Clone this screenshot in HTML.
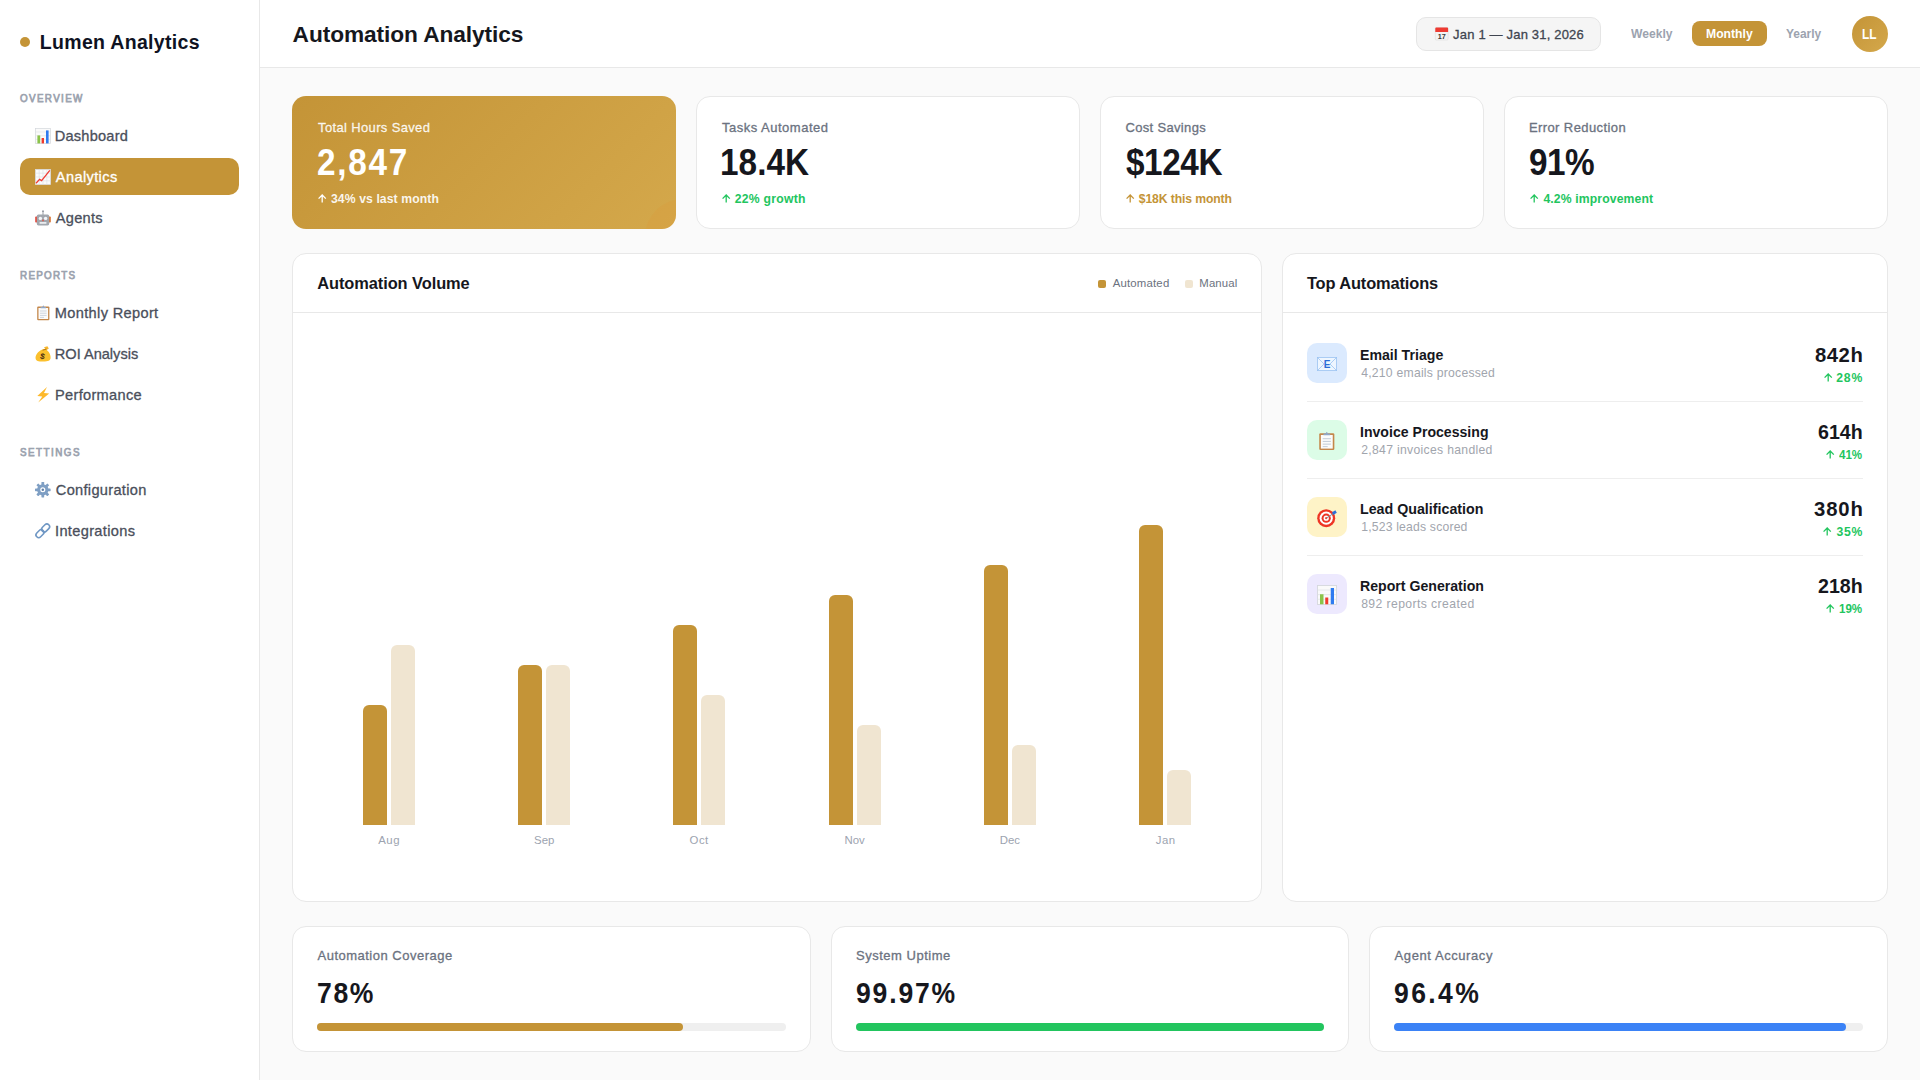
<!DOCTYPE html>
<html lang="en">
<head>
<meta charset="utf-8">
<title>Automation Analytics</title>
<style>
*{box-sizing:border-box;margin:0;padding:0}
html,body{width:1920px;height:1080px;overflow:hidden}
body{font-family:"Liberation Sans",sans-serif;background:#fafafa;color:#16171d;position:relative}
.t{position:absolute;line-height:20px;white-space:nowrap;transform-origin:0 50%}
.m{-webkit-text-stroke:.3px}
.s{-webkit-text-stroke:.75px}
.a{position:absolute}
svg{position:absolute;overflow:visible}
.sidebar{left:0;top:0;width:260px;height:1080px;background:#fff;border-right:1px solid #e8e8e8}
.header{left:260px;top:0;width:1660px;height:68px;background:#fff;border-bottom:1px solid #e8e8e8}
.card{background:#fff;border:1px solid #e8e8e8;border-radius:14px}
.gold{background:linear-gradient(135deg,#c49437 0%,#d4a84b 100%);border-radius:14px}
.bar{width:24px;border-radius:6px 6px 0 0}
.ib{left:1307px;width:40px;height:40px;border-radius:10px}
.sep{left:1307px;width:556px;height:1px;background:#eeeeee}
.trk{height:8px;border-radius:4px;background:#efefef}
.fil{height:8px;border-radius:4px}
</style>
</head>
<body>
<div class="a sidebar"></div>
<div class="a header"></div>
<div class="a" style="left:20px;top:37px;width:10px;height:10px;border-radius:50%;background:#c49437"></div>
<div class="a" style="left:20px;top:158px;width:219px;height:37px;border-radius:10px;background:#c49437"></div>
<svg style="left:35px;top:128.4px" width="16" height="16" viewBox="0 0 16 16"><rect x=".4" y=".4" width="15.2" height="15.2" fill="#fafafa" stroke="#d4d7dc" stroke-width=".7"/><path d="M.5 4h15M.5 7.7h15M.5 11.4h15" stroke="#dfe2e6" stroke-width=".6"/><rect x="2.4" y="7.4" width="2.8" height="8" fill="#8bc34a"/><rect x="6.6" y="10" width="2.4" height="5.4" fill="#f03a2e"/><rect x="11" y="2.4" width="2.6" height="13" fill="#2f7bf0"/></svg>
<svg style="left:35px;top:169.4px" width="16" height="16" viewBox="0 0 16 16"><rect x=".4" y=".4" width="15.2" height="15.2" fill="#fbfbfb" stroke="#d9dbdf" stroke-width=".7"/><path d="M.5 4.2h15M.5 8h15M.5 11.8h15M4.2 .5v15M8 .5v15M11.8 .5v15" stroke="#dcdfe3" stroke-width=".6"/><path d="M1 14.2L4.6 10.4L6.6 11.6L14.8 1.4" fill="none" stroke="#ef3b33" stroke-width="1.3"/></svg>
<svg style="left:35px;top:210px" width="16" height="16" viewBox="0 0 16 16"><path d="M8 1v4" stroke="#8e949c" stroke-width=".9"/><circle cx="8" cy="1.2" r=".9" fill="#8e949c"/><rect x=".2" y="6.6" width="2.2" height="6" rx=".8" fill="#e2493b"/><rect x="13.6" y="6.6" width="2.2" height="6" rx=".8" fill="#d9712f"/><rect x="1.8" y="4.6" width="12.4" height="10.8" rx="1.6" fill="#a2a7ae"/><circle cx="5.4" cy="8.4" r="1.7" fill="#f4f6f8"/><circle cx="10.6" cy="8.4" r="1.7" fill="#f4f6f8"/><rect x="7.3" y="9.6" width="1.4" height="1.6" fill="#e2493b"/><rect x="4.6" y="12" width="6.8" height="1.8" fill="#e9ecef"/></svg>
<svg style="left:36.5px;top:305.4px" width="12.6" height="15.4" viewBox="0 0 12.6 15.4"><rect x=".2" y="1.6" width="12.2" height="13.6" rx="1" fill="#c4874a"/><rect x="1.5" y="3" width="9.6" height="11" fill="#fbfbfb"/><path d="M3 6h6.6M3 8.2h6.6M3 10.4h6.6M3 12.4h4" stroke="#b9c4d2" stroke-width=".7"/><path d="M3.6 3.2V1.9h1.7L6.3.3l1 1.6h1.7v1.3z" fill="#8fa7c6"/></svg>
<svg style="left:35px;top:346px" width="16" height="16" viewBox="0 0 16 16"><path d="M9 1.2l3.4-1 1.4 2.4-2.6 1.6z" fill="#f7b52c"/><path d="M7.4 3.6l3.8-1 1 1.8c2.4 2 3.6 4.6 3.4 7.6-.2 2.4-2.2 3.6-7.4 3.6S1 14.6.6 12.400C.2 9.4 2.8 5.6 7.4 3.600z" fill="#fbc02d"/><path d="M7.6 4.200l3.8-1.1" stroke="#a86b12" stroke-width=".9"/><text x="7.6" y="13" font-family="Liberation Sans" font-weight="700" font-size="8" text-anchor="middle" fill="#4a2f12" transform="rotate(12 7.6 10)">$</text></svg>
<svg style="left:36.8px;top:387.4px" width="12.4" height="15.6" viewBox="0 0 12.4 15.6"><path d="M10 0L.3 9.100l5 .3L1.2 15.6 12.2 6.4 7 6z" fill="#fdb92c"/></svg>
<svg style="left:35px;top:482.4px" width="15.6" height="15.6" viewBox="0 0 16 16"><g fill="#7f9fc4"><rect x="6.6" y="0" width="2.8" height="16" rx=".5" transform="rotate(0 8 8)"/><rect x="6.6" y="0" width="2.8" height="16" rx=".5" transform="rotate(45 8 8)"/><rect x="6.6" y="0" width="2.8" height="16" rx=".5" transform="rotate(90 8 8)"/><rect x="6.6" y="0" width="2.8" height="16" rx=".5" transform="rotate(135 8 8)"/><circle cx="8" cy="8" r="5.8"/></g><circle cx="8" cy="8" r="2.6" fill="#fff"/><circle cx="8" cy="8" r="1.3" fill="#5f7fa8"/></svg>
<svg style="left:35px;top:523.4px" width="15.6" height="15.6" viewBox="0 0 16 16" fill="none" stroke="#6f97c4" stroke-width="1.6"><rect x="8.1" y=".5" width="5.6" height="9.2" rx="2.8" transform="rotate(45 10.9 5.1)"/><rect x="2.3" y="6.3" width="5.6" height="9.2" rx="2.8" transform="rotate(45 5.1 10.9)"/></svg>
<div class="a" style="left:1416px;top:17px;width:185px;height:34px;border-radius:10px;background:#f5f5f5;border:1px solid #e5e5e5"></div>
<svg style="left:1434.7px;top:27.2px" width="13.4" height="13.4" viewBox="0 0 14 14"><rect x=".3" y=".6" width="13.4" height="13" rx="1" fill="#f3f3f3" stroke="#d8d8d8" stroke-width=".5"/><path d="M.3 1.600a1 1 0 0 1 1-1h11.400a1 1 0 0 1 1 1V5.200H.3z" fill="#ee3b32"/><text x="7" y="12.4" font-family="Liberation Sans" font-weight="700" font-size="7.6" text-anchor="middle" fill="#3a3a3a">17</text></svg>
<div class="a" style="left:1692px;top:21px;width:75px;height:25px;border-radius:8px;background:#c49437"></div>
<div class="a" style="left:1852px;top:16px;width:36px;height:36px;border-radius:50%;background:linear-gradient(135deg,#c49437,#d4a84b)"></div>
<div class="a gold" style="left:292px;top:96px;width:384px;height:133px;overflow:hidden"><div class="a" style="left:353px;top:103px;width:76px;height:76px;border-radius:50%;background:rgba(226,150,48,.2)"></div></div>
<div class="a card" style="left:696px;top:96px;width:384px;height:133px"></div>
<div class="a card" style="left:1100px;top:96px;width:384px;height:133px"></div>
<div class="a card" style="left:1504px;top:96px;width:384px;height:133px"></div>
<svg style="left:318.00px;top:194.40px" width="8.4" height="8.6" viewBox="0 0 8.4 8.6" fill="none" stroke="#fff" stroke-width="1.3"><path d="M4.2 8.6V1.2M0.6 4.6000000000000005L4.2 1L7.800000000000001 4.6000000000000005"/></svg>
<svg style="left:721.90px;top:194.40px" width="8.4" height="8.6" viewBox="0 0 8.4 8.6" fill="none" stroke="#22c55e" stroke-width="1.3"><path d="M4.2 8.6V1.2M0.6 4.6000000000000005L4.2 1L7.800000000000001 4.6000000000000005"/></svg>
<svg style="left:1125.90px;top:194.40px" width="8.4" height="8.6" viewBox="0 0 8.4 8.6" fill="none" stroke="#c49437" stroke-width="1.3"><path d="M4.2 8.6V1.2M0.6 4.6000000000000005L4.2 1L7.800000000000001 4.6000000000000005"/></svg>
<svg style="left:1529.90px;top:194.40px" width="8.4" height="8.6" viewBox="0 0 8.4 8.6" fill="none" stroke="#22c55e" stroke-width="1.3"><path d="M4.2 8.6V1.2M0.6 4.6000000000000005L4.2 1L7.800000000000001 4.6000000000000005"/></svg>
<div class="a card" style="left:292px;top:253px;width:970px;height:649px"></div>
<div class="a" style="left:293px;top:312px;width:968px;height:1px;background:#e8e8e8"></div>
<div class="a" style="left:1098px;top:280px;width:8px;height:8px;border-radius:2px;background:#c49437"></div>
<div class="a" style="left:1185px;top:280px;width:8px;height:8px;border-radius:2px;background:#f0e5d1"></div>
<div class="a bar" style="left:363px;top:705px;height:120px;background:#c49437"></div>
<div class="a bar" style="left:391px;top:645px;height:180px;background:#f0e5d1"></div>
<div class="a bar" style="left:518px;top:665px;height:160px;background:#c49437"></div>
<div class="a bar" style="left:546px;top:665px;height:160px;background:#f0e5d1"></div>
<div class="a bar" style="left:673px;top:625px;height:200px;background:#c49437"></div>
<div class="a bar" style="left:701px;top:695px;height:130px;background:#f0e5d1"></div>
<div class="a bar" style="left:829px;top:595px;height:230px;background:#c49437"></div>
<div class="a bar" style="left:857px;top:725px;height:100px;background:#f0e5d1"></div>
<div class="a bar" style="left:984px;top:565px;height:260px;background:#c49437"></div>
<div class="a bar" style="left:1012px;top:745px;height:80px;background:#f0e5d1"></div>
<div class="a bar" style="left:1139px;top:525px;height:300px;background:#c49437"></div>
<div class="a bar" style="left:1167px;top:770px;height:55px;background:#f0e5d1"></div>
<div class="a card" style="left:1282px;top:253px;width:606px;height:649px"></div>
<div class="a" style="left:1283px;top:312px;width:604px;height:1px;background:#e8e8e8"></div>
<div class="a ib" style="top:343px;background:#dbeafe"></div>
<div class="a sep" style="top:401px"></div>
<svg style="left:1823.70px;top:373.20px" width="8.4" height="8.6" viewBox="0 0 8.4 8.6" fill="none" stroke="#22c55e" stroke-width="1.3"><path d="M4.2 8.6V1.2M0.6 4.6000000000000005L4.2 1L7.800000000000001 4.6000000000000005"/></svg>
<div class="a ib" style="top:420px;background:#dcfce7"></div>
<div class="a sep" style="top:478px"></div>
<svg style="left:1825.80px;top:450.20px" width="8.4" height="8.6" viewBox="0 0 8.4 8.6" fill="none" stroke="#22c55e" stroke-width="1.3"><path d="M4.2 8.6V1.2M0.6 4.6000000000000005L4.2 1L7.800000000000001 4.6000000000000005"/></svg>
<div class="a ib" style="top:497px;background:#fef3c7"></div>
<div class="a sep" style="top:555px"></div>
<svg style="left:1823.40px;top:527.20px" width="8.4" height="8.6" viewBox="0 0 8.4 8.6" fill="none" stroke="#22c55e" stroke-width="1.3"><path d="M4.2 8.6V1.2M0.6 4.6000000000000005L4.2 1L7.800000000000001 4.6000000000000005"/></svg>
<div class="a ib" style="top:574px;background:#ede9fe"></div>
<svg style="left:1825.80px;top:604.20px" width="8.4" height="8.6" viewBox="0 0 8.4 8.6" fill="none" stroke="#22c55e" stroke-width="1.3"><path d="M4.2 8.6V1.2M0.6 4.6000000000000005L4.2 1L7.800000000000001 4.6000000000000005"/></svg>
<svg style="left:1317px;top:356.8px" width="20" height="14" viewBox="0 0 20 14"><rect x=".4" y=".4" width="19.2" height="13.2" fill="#eef6ff" stroke="#9cc4f2" stroke-width=".8"/><path d="M.6.6L7 7 .6 13.400M19.4.6L13 7l6.4 6.4" fill="none" stroke="#9cc4f2" stroke-width=".8"/><text x="10" y="10.6" font-family="Liberation Sans" font-weight="700" font-size="10" text-anchor="middle" fill="#2c6cd6">E</text></svg>
<svg style="left:1319px;top:431px" width="15.6" height="19.6" viewBox="0 0 12.6 15.4"><rect x=".2" y="1.6" width="12.2" height="13.6" rx="1" fill="#c4874a"/><rect x="1.5" y="3" width="9.6" height="11" fill="#fbfbfb"/><path d="M3 6h6.6M3 8.2h6.6M3 10.4h6.6M3 12.4h4" stroke="#b9c4d2" stroke-width=".7"/><path d="M3.6 3.2V1.9h1.7L6.3.3l1 1.6h1.7v1.3z" fill="#8fa7c6"/></svg>
<svg style="left:1317.2px;top:508.6px" width="20" height="18.4" viewBox="0 0 20 18.4"><circle cx="9.2" cy="9.2" r="9" fill="#ee3524"/><circle cx="9.2" cy="9.2" r="6.6" fill="#fff"/><circle cx="9.2" cy="9.2" r="4.6" fill="#ee3524"/><circle cx="9.2" cy="9.2" r="2.6" fill="#fff"/><circle cx="9.2" cy="9.2" r="1.1" fill="#ee3524"/><path d="M9.2 9.200L16.6 4.4" stroke="#8a8f98" stroke-width="1"/><path d="M15 3.200l3.4-2 1.4 2.6-3.4 2.200z" fill="#2f6fd6"/></svg>
<svg style="left:1317px;top:585px" width="20" height="20" viewBox="0 0 16 16"><rect x=".4" y=".4" width="15.2" height="15.2" fill="#fafafa" stroke="#d4d7dc" stroke-width=".7"/><path d="M.5 4h15M.5 7.7h15M.5 11.4h15" stroke="#dfe2e6" stroke-width=".6"/><rect x="2.4" y="7.4" width="2.8" height="8" fill="#8bc34a"/><rect x="6.6" y="10" width="2.4" height="5.4" fill="#f03a2e"/><rect x="11" y="2.4" width="2.6" height="13" fill="#2f7bf0"/></svg>
<div class="a card" style="left:292px;top:926px;width:519px;height:126px"></div>
<div class="a trk" style="left:317px;top:1023px;width:469px"></div>
<div class="a fil" style="left:317px;top:1023px;width:365.8px;background:#c49437"></div>
<div class="a card" style="left:831px;top:926px;width:518px;height:126px"></div>
<div class="a trk" style="left:856px;top:1023px;width:468px"></div>
<div class="a fil" style="left:856px;top:1023px;width:467.9px;background:#22c55e"></div>
<div class="a card" style="left:1369px;top:926px;width:519px;height:126px"></div>
<div class="a trk" style="left:1394px;top:1023px;width:469px"></div>
<div class="a fil" style="left:1394px;top:1023px;width:452.1px;background:#3b82f6"></div>
<div class="t" style="left:39.80px;top:32px;font-size:19.5px;letter-spacing:0.315px;color:#0f1222;font-weight:700">Lumen Analytics</div>
<div class="t s" style="left:20.30px;top:88px;font-size:11.2px;letter-spacing:1.547px;transform:scaleX(0.88);color:#9ca3af">OVERVIEW</div>
<div class="t m" style="left:54.80px;top:126px;font-size:14.6px;letter-spacing:0.203px;color:#4a4f5b">Dashboard</div>
<div class="t m" style="left:55.80px;top:167px;font-size:14.6px;letter-spacing:0.375px;color:#ffffff">Analytics</div>
<div class="t m" style="left:55.80px;top:208px;font-size:14.6px;letter-spacing:0.252px;color:#4a4f5b">Agents</div>
<div class="t s" style="left:20.30px;top:265px;font-size:11.2px;letter-spacing:1.457px;transform:scaleX(0.88);color:#9ca3af">REPORTS</div>
<div class="t m" style="left:54.80px;top:303px;font-size:14.6px;letter-spacing:0.338px;color:#4a4f5b">Monthly Report</div>
<div class="t m" style="left:54.80px;top:344px;font-size:14.6px;letter-spacing:-0.013px;color:#4a4f5b">ROI Analysis</div>
<div class="t m" style="left:55.00px;top:385px;font-size:14.6px;letter-spacing:0.307px;color:#4a4f5b">Performance</div>
<div class="t s" style="left:20.30px;top:442px;font-size:11.2px;letter-spacing:1.668px;transform:scaleX(0.88);color:#9ca3af">SETTINGS</div>
<div class="t m" style="left:55.80px;top:480px;font-size:14.6px;letter-spacing:0.309px;color:#4a4f5b">Configuration</div>
<div class="t m" style="left:55.00px;top:521px;font-size:14.6px;letter-spacing:0.340px;color:#4a4f5b">Integrations</div>
<div class="t" style="left:292.60px;top:24px;font-size:22.7px;letter-spacing:-0.083px;color:#16171d;font-weight:700">Automation Analytics</div>
<div class="t m" style="left:1453.10px;top:25px;font-size:13px;letter-spacing:0.180px;color:#3f4550">Jan 1 — Jan 31, 2026</div>
<div class="t" style="left:1631.10px;top:24px;font-size:13px;transform:scaleX(0.9308);color:#9ca3af;font-weight:700">Weekly</div>
<div class="t" style="left:1705.60px;top:24px;font-size:13px;transform:scaleX(0.9369);color:#ffffff;font-weight:700">Monthly</div>
<div class="t" style="left:1785.80px;top:24px;font-size:13px;transform:scaleX(0.9185);color:#9ca3af;font-weight:700">Yearly</div>
<div class="t" style="left:1862.30px;top:24px;font-size:14px;transform:scaleX(0.8489);color:#ffffff;font-weight:700">LL</div>
<div class="t m" style="left:318.10px;top:118px;font-size:13px;letter-spacing:0.351px;color:rgba(255,255,255,.88)">Total Hours Saved</div>
<div class="t" style="left:317.20px;top:153px;font-size:37px;letter-spacing:1.913px;transform:scaleX(0.9);color:#ffffff;font-weight:700">2,847</div>
<div class="t" style="left:331.00px;top:189px;font-size:12.2px;letter-spacing:0.094px;color:rgba(255,255,255,.92);font-weight:700">34% vs last month</div>
<div class="t m" style="left:721.90px;top:118px;font-size:13px;letter-spacing:0.508px;color:#6b7280">Tasks Automated</div>
<div class="t" style="left:720.40px;top:153px;font-size:37px;letter-spacing:0.080px;transform:scaleX(0.9);color:#16171d;font-weight:700">18.4K</div>
<div class="t" style="left:734.80px;top:189px;font-size:12.2px;letter-spacing:0.250px;color:#22c55e;font-weight:700">22% growth</div>
<div class="t m" style="left:1125.50px;top:118px;font-size:13px;letter-spacing:0.328px;color:#6b7280">Cost Savings</div>
<div class="t" style="left:1126.20px;top:153px;font-size:37px;letter-spacing:-0.439px;transform:scaleX(0.9);color:#16171d;font-weight:700">$124K</div>
<div class="t" style="left:1138.80px;top:189px;font-size:12.2px;letter-spacing:-0.119px;color:#c49437;font-weight:700">$18K this month</div>
<div class="t m" style="left:1528.90px;top:118px;font-size:13px;letter-spacing:0.414px;color:#6b7280">Error Reduction</div>
<div class="t" style="left:1529.30px;top:153px;font-size:37px;letter-spacing:-0.522px;transform:scaleX(0.9);color:#16171d;font-weight:700">91%</div>
<div class="t" style="left:1543.40px;top:189px;font-size:12.2px;letter-spacing:0.131px;color:#22c55e;font-weight:700">4.2% improvement</div>
<div class="t" style="left:317.20px;top:273px;font-size:16.4px;letter-spacing:-0.067px;color:#16171d;font-weight:700">Automation Volume</div>
<div class="t" style="left:1112.70px;top:273px;font-size:11.4px;letter-spacing:0.181px;color:#6b7280">Automated</div>
<div class="t" style="left:1199.30px;top:273px;font-size:11.4px;letter-spacing:0.114px;color:#6b7280">Manual</div>
<div class="t" style="left:378.25px;top:830px;font-size:11.4px;letter-spacing:0.484px;color:#9ca3af">Aug</div>
<div class="t" style="left:534.00px;top:830px;font-size:11.4px;letter-spacing:0.034px;color:#9ca3af">Sep</div>
<div class="t" style="left:689.55px;top:830px;font-size:11.4px;letter-spacing:0.472px;color:#9ca3af">Oct</div>
<div class="t" style="left:844.45px;top:830px;font-size:11.4px;letter-spacing:-0.030px;color:#9ca3af">Nov</div>
<div class="t" style="left:999.75px;top:830px;font-size:11.4px;letter-spacing:-0.030px;color:#9ca3af">Dec</div>
<div class="t" style="left:1155.80px;top:830px;font-size:11.4px;letter-spacing:0.485px;color:#9ca3af">Jan</div>
<div class="t" style="left:1306.90px;top:273px;font-size:16.4px;letter-spacing:-0.116px;color:#16171d;font-weight:700">Top Automations</div>
<div class="t" style="left:1360.27px;top:345px;font-size:15.2px;transform:scaleX(0.9303);color:#16171d;font-weight:700">Email Triage</div>
<div class="t" style="left:1361.20px;top:363px;font-size:12.2px;letter-spacing:0.236px;color:#a1a5ad">4,210 emails processed</div>
<div class="t" style="left:1815.00px;top:345px;font-size:20.3px;letter-spacing:0.521px;color:#16171d;font-weight:700">842h</div>
<div class="t" style="left:1836.20px;top:368px;font-size:12.2px;letter-spacing:0.822px;color:#22c55e;font-weight:700">28%</div>
<div class="t" style="left:1360.27px;top:422px;font-size:15.2px;transform:scaleX(0.9282);color:#16171d;font-weight:700">Invoice Processing</div>
<div class="t" style="left:1361.20px;top:440px;font-size:12.2px;letter-spacing:0.310px;color:#a1a5ad">2,847 invoices handled</div>
<div class="t" style="left:1818.10px;top:422px;font-size:20.3px;transform:scaleX(0.9664);color:#16171d;font-weight:700">614h</div>
<div class="t" style="left:1839.10px;top:445px;font-size:12.2px;transform:scaleX(0.9488);color:#22c55e;font-weight:700">41%</div>
<div class="t" style="left:1360.26px;top:499px;font-size:15.2px;transform:scaleX(0.9373);color:#16171d;font-weight:700">Lead Qualification</div>
<div class="t" style="left:1361.20px;top:517px;font-size:12.2px;letter-spacing:0.188px;color:#a1a5ad">1,523 leads scored</div>
<div class="t" style="left:1814.00px;top:499px;font-size:20.3px;letter-spacing:0.854px;color:#16171d;font-weight:700">380h</div>
<div class="t" style="left:1836.60px;top:522px;font-size:12.2px;letter-spacing:0.622px;color:#22c55e;font-weight:700">35%</div>
<div class="t" style="left:1360.27px;top:576px;font-size:15.2px;transform:scaleX(0.9299);color:#16171d;font-weight:700">Report Generation</div>
<div class="t" style="left:1361.20px;top:594px;font-size:12.2px;letter-spacing:0.405px;color:#a1a5ad">892 reports created</div>
<div class="t" style="left:1818.10px;top:576px;font-size:20.3px;transform:scaleX(0.9664);color:#16171d;font-weight:700">218h</div>
<div class="t" style="left:1839.10px;top:599px;font-size:12.2px;transform:scaleX(0.9488);color:#22c55e;font-weight:700">19%</div>
<div class="t m" style="left:317.50px;top:946px;font-size:13px;letter-spacing:0.494px;color:#6b7280">Automation Coverage</div>
<div class="t" style="left:316.90px;top:983px;font-size:29.5px;letter-spacing:1.816px;transform:scaleX(0.9);color:#16171d;font-weight:700">78%</div>
<div class="t m" style="left:856.00px;top:946px;font-size:13px;letter-spacing:0.508px;color:#6b7280">System Uptime</div>
<div class="t" style="left:856.00px;top:983px;font-size:29.5px;letter-spacing:2.036px;transform:scaleX(0.9);color:#16171d;font-weight:700">99.97%</div>
<div class="t m" style="left:1394.60px;top:946px;font-size:13px;letter-spacing:0.574px;color:#6b7280">Agent Accuracy</div>
<div class="t" style="left:1394.30px;top:983px;font-size:29.5px;letter-spacing:2.646px;transform:scaleX(0.9);color:#16171d;font-weight:700">96.4%</div>
</body>
</html>
